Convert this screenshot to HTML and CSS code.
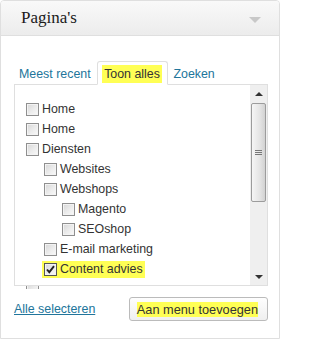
FILE: index.html
```html
<!DOCTYPE html>
<html lang="nl">
<head>
<meta charset="utf-8">
<title>Pagina's</title>
<link rel="stylesheet" href="styles.css">
</head>
<body>
<div class="box">
  <div class="hd">
    <h3 class="title">Pagina's</h3>
    <span class="toggle"></span>
  </div>
  <div class="inside">
    <ul class="tabs">
      <li class="tab">Meest recent</li>
      <li class="tab active"><span class="hl">Toon alles</span></li>
      <li class="tab tab-last">Zoeken</li>
    </ul>
    <div class="panel">
      <ul class="list">
        <li class="row"><span class="cb"></span><span class="lbl">Home</span></li>
        <li class="row"><span class="cb"></span><span class="lbl">Home</span></li>
        <li class="row"><span class="cb"></span><span class="lbl">Diensten</span></li>
        <li class="row l2"><span class="cb"></span><span class="lbl">Websites</span></li>
        <li class="row l2"><span class="cb"></span><span class="lbl">Webshops</span></li>
        <li class="row l3"><span class="cb"></span><span class="lbl">Magento</span></li>
        <li class="row l3"><span class="cb"></span><span class="lbl">SEOshop</span></li>
        <li class="row l2"><span class="cb"></span><span class="lbl">E-mail marketing</span></li>
        <li class="row l2h"><span class="hl-row"><span class="cb checked"><svg class="tick" width="11" height="11" viewBox="0 0 11 11"><path d="M2 5.5 L4.3 8.2 L9 2.2" fill="none" stroke="#222" stroke-width="1.9"/></svg></span><span class="lbl">Content advies</span></span></li>
      </ul>
      <div class="sb">
        <div class="sb-btn"><span class="arr-up"></span></div>
        <div class="sb-thumb"><span class="grip"></span></div>
        <div class="sb-track"></div>
        <div class="sb-btn"><span class="arr-down"></span></div>
      </div>
    </div>
    <div class="peek"><span class="cb"></span></div>
    <div class="actions">
      <a class="select-all" href="#">Alle selecteren</a>
      <button class="btn" type="button"><span class="hl hl-btn">Aan menu toevoegen</span></button>
    </div>
  </div>
</div>
</body>
</html>
```
FILE: styles.css
```css
html, body {
  margin: 0;
  padding: 0;
  background: #fff;
}

body {
  font-family: "Liberation Sans", Arial, sans-serif;
  font-size: 12.4px;
  color: #333;
}

.box {
  width: 278px;
  border: 1px solid #dfdfdf;
  border-radius: 4px 4px 0 0;
  background: #fff;
  overflow: hidden;
}

.hd {
  height: 34px;
  border-bottom: 1px solid #dfdfdf;
  background: linear-gradient(#f9f9f9, #ececec);
  display: flex;
  align-items: center;
  justify-content: space-between;
  padding: 0 18px 0 20px;
}

.title {
  margin: 0;
  font-family: "Liberation Serif", "Times New Roman", serif;
  font-weight: normal;
  font-size: 17px;
  line-height: 34px;
  color: #1a1a1a;
}

.toggle {
  width: 0;
  height: 0;
  margin-top: 3px;
  border-left: 6px solid transparent;
  border-right: 6px solid transparent;
  border-top: 6px solid #c8c8c8;
}

.inside {
  padding: 25px 11px 17px 13px;
}

.tabs {
  list-style: none;
  margin: 0;
  padding: 0;
  display: flex;
  align-items: flex-end;
  position: relative;
  z-index: 1;
}

.tab {
  border: 1px solid transparent;
  border-bottom: 1px solid transparent;
  padding: 3px 5px 1px 4px;
  line-height: 18px;
  margin-bottom: -1px;
  color: #21759b;
}

.tab.active {
  margin-left: 0;
  padding-right: 5px;
  border-color: #dfdfdf;
  border-bottom-color: #fff;
  border-radius: 3px 3px 0 0;
  background: #fff;
  color: #333;
}

.hl {
  background: #ffff55;
}

.tab .hl {
  display: inline-block;
  padding: 0 2.5px;
}

.panel {
  height: 200px;
  border: 1px solid #dfdfdf;
  display: flex;
  background: #fff;
}

.list {
  flex: 1;
  list-style: none;
  margin: 0;
  padding: 14px 0 0 0;
  overflow: hidden;
}

.row {
  height: 20px;
  display: flex;
  align-items: center;
  padding-left: 11px;
  white-space: nowrap;
}

.row.l2 { padding-left: 29px; }
.row.l3 { padding-left: 47px; }
.row.l2h { padding-left: 27px; }

.cb {
  box-sizing: border-box;
  flex: none;
  width: 13px;
  height: 13px;
  border: 1px solid #8f8f8f;
  background: linear-gradient(135deg, #d6d6d6 0%, #ececec 55%, #fafafa 100%);
  box-shadow: inset 0 0 0 1px #f3f3f3;
  display: inline-flex;
  align-items: center;
  justify-content: center;
}

.cb.checked {
  border-color: #555;
}

.tick {
  display: block;
}

.lbl {
  margin-left: 3px;
  line-height: 15px;
}

.hl-row {
  display: inline-flex;
  align-items: center;
  background: #ffff55;
  padding: 1px 2px;
}

.sb {
  width: 17px;
  flex: none;
  background: #efefef;
  display: flex;
  flex-direction: column;
}

.sb-btn {
  height: 17px;
  display: flex;
  align-items: center;
  justify-content: center;
}

.arr-up {
  width: 0;
  height: 0;
  border-left: 4px solid transparent;
  border-right: 4px solid transparent;
  border-bottom: 4px solid #333;
}

.arr-down {
  width: 0;
  height: 0;
  border-left: 4px solid transparent;
  border-right: 4px solid transparent;
  border-top: 4px solid #333;
}

.sb-thumb {
  box-sizing: border-box;
  height: 99px;
  margin: 1px 1px 0 1px;
  border: 1px solid #9c9c9c;
  border-radius: 2px;
  background: linear-gradient(to right, #f6f6f6, #e4e4e4 60%, #d2d2d2);
  display: flex;
  align-items: center;
  justify-content: center;
}

.grip {
  width: 7px;
  height: 5px;
  background: linear-gradient(#777 0 1px, transparent 1px 2px, #777 2px 3px, transparent 3px 4px, #777 4px 5px);
}

.sb-track {
  flex: 1;
}

.peek {
  height: 3px;
  overflow: hidden;
  padding-left: 12px;
}

.peek .cb {
  display: block;
  margin-top: -4px;
}

.actions {
  margin-top: 8px;
  display: flex;
  align-items: center;
  justify-content: space-between;
}

.select-all {
  color: #21759b;
  text-decoration: underline;
  line-height: 14px;
}

.btn {
  box-sizing: border-box;
  height: 24px;
  margin: 0;
  padding: 0 9px 0 7px;
  border: 1px solid #bbb;
  border-radius: 3px;
  background: linear-gradient(#fefefe, #efefef);
  font-family: "Liberation Sans", Arial, sans-serif;
  font-size: 12.75px;
  color: #333;
  display: flex;
  align-items: center;
}

.hl-btn {
  line-height: 15px;
}
```
